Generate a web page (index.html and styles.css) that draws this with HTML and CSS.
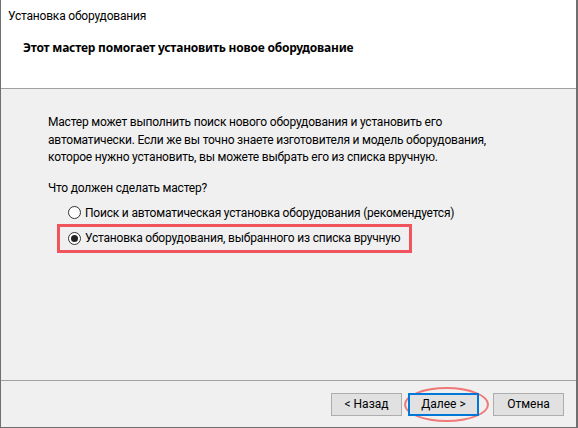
FILE: index.html
```html
<!DOCTYPE html>
<html lang="ru">
<head>
    <meta charset="UTF-8">
    <title>Установка оборудования</title>
    <link rel="stylesheet" href="styles.css">
</head>
<body>

    <div class="wizard">
        <div class="header">
            <div class="caption">Установка оборудования</div>
            <div class="subtitle">Этот мастер помогает установить новое оборудование</div>
        </div>

        <div class="content">
            <p class="intro">Мастер может выполнить поиск нового оборудования и установить его<br>
                автоматически. Если же вы точно знаете изготовителя и модель оборудования,<br>
                которое нужно установить, вы можете выбрать его из списка вручную.</p>
            <p class="question">Что должен сделать мастер?</p>
            <div class="options">
                <label class="option">
                    <input type="radio" name="mode">
                    <span class="radio"></span>
                    Поиск и автоматическая установка оборудования (рекомендуется)
                </label>
                <label class="option marked">
                    <input type="radio" name="mode" checked>
                    <span class="radio"></span>
                    Установка оборудования, выбранного из списка вручную
                </label>
            </div>
        </div>

        <div class="footer">
            <button class="btn">&lt; Назад</button>
            <span class="ring">
                <button class="btn default">Далее &gt;</button>
            </span>
            <button class="btn cancel">Отмена</button>
        </div>
    </div>

</body>
</html>
```

FILE: styles.css
```css
html, body {
    margin: 0;
    height: 100%;
}

body {
    font-family: Roboto, "Noto Sans", sans-serif;
    font-size: 12px;
    letter-spacing: -0.2px;
    color: #000;
    background: #f0f0f0;
}

.wizard {
    height: 100%;
    box-sizing: border-box;
    display: flex;
    flex-direction: column;
    border-left: 1px solid #6f6f6f;
    border-right: 2px solid #6f6f6f;
    border-bottom: 1px solid #6f6f6f;
    background: #f0f0f0;
}

.header {
    height: 88px;
    background: #fff;
    border-bottom: 1px solid #a0a0a0;
}

.caption {
    padding: 8px 0 0 7px;
    line-height: 17px;
}

.subtitle {
    padding: 14px 0 0 22px;
    font-family: "Noto Sans", sans-serif;
    font-weight: bold;
    line-height: 17px;
}

.content {
    flex: 1;
    padding: 25px 20px 0 47px;
    border-bottom: 1px solid #a0a0a0;
}

.intro {
    margin: 0;
    white-space: nowrap;
    line-height: 17.5px;
}

.question {
    margin: 13px 0 2px;
    line-height: 17px;
}

.options {
    margin-left: 9px;
}

.option {
    display: flex;
    align-items: center;
    width: max-content;
    height: 22px;
    padding: 0 8px;
    border: 3px solid transparent;
    border-bottom-width: 0;
}

.option input {
    display: none;
}

.radio {
    width: 11px;
    height: 11px;
    border: 1px solid #333;
    border-radius: 50%;
    background: #fff;
    margin-right: 4px;
    display: flex;
    align-items: center;
    justify-content: center;
}

.option input:checked + .radio::after {
    content: "";
    width: 7px;
    height: 7px;
    border-radius: 50%;
    background: #222;
}

.marked {
    border: 3px solid #f0545c;
    height: 23px;
    padding-right: 9px;
}

.footer {
    height: 46px;
    display: flex;
    align-items: center;
    justify-content: flex-end;
    padding-right: 12px;
}

.btn {
    font: inherit;
    width: 71px;
    height: 23px;
    border: 1px solid #adadad;
    background: #e1e1e1;
    padding: 0;
    margin-left: 4px;
}

.ring {
    margin-left: 2px;
    padding: 4px 8px 4px 2px;
    border: 2px solid #f07878;
    border-radius: 50%;
    display: flex;
}

.ring .btn {
    margin: 0;
}

.default {
    border: 2px solid #0078d7;
}
```
